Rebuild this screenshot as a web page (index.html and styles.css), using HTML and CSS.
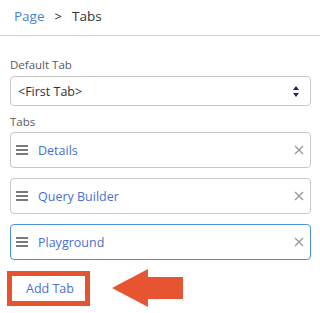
FILE: index.html
```html
<!DOCTYPE html>
<html lang="en">

<head>
    <meta charset="UTF-8">
    <meta name="viewport" content="width=device-width, initial-scale=1.0">
    <title>Tabs</title>
    <link rel="stylesheet" href="styles.css">
</head>

<body>

    <div class="crumbs">
        <a href="#">Page</a>
        <span class="sep">&gt;</span>
        <span class="current">Tabs</span>
    </div>

    <div class="panel">
        <label class="field-label">Default Tab</label>
        <div class="select">
            <span>&lt;First Tab&gt;</span>
            <svg width="6" height="11" viewBox="0 0 6 11">
                <path d="M3 0 L6 4 L0 4 Z M0 7 L6 7 L3 11 Z" fill="#1f2a4d" />
            </svg>
        </div>

        <label class="field-label tabs-label">Tabs</label>
        <div class="tab-list">
            <div class="tab-row">
                <span class="grip"><i></i><i></i><i></i></span>
                <span class="tab-name">Details</span>
                <svg class="close" width="10" height="10" viewBox="0 0 10 10">
                    <path d="M1 1 L9 9 M9 1 L1 9" stroke="#9a9a9a" stroke-width="1.4" />
                </svg>
            </div>
            <div class="tab-row">
                <span class="grip"><i></i><i></i><i></i></span>
                <span class="tab-name">Query Builder</span>
                <svg class="close" width="10" height="10" viewBox="0 0 10 10">
                    <path d="M1 1 L9 9 M9 1 L1 9" stroke="#9a9a9a" stroke-width="1.4" />
                </svg>
            </div>
            <div class="tab-row active">
                <span class="grip"><i></i><i></i><i></i></span>
                <span class="tab-name">Playground</span>
                <svg class="close" width="10" height="10" viewBox="0 0 10 10">
                    <path d="M1 1 L9 9 M9 1 L1 9" stroke="#9a9a9a" stroke-width="1.4" />
                </svg>
            </div>
        </div>

        <div class="add-row">
            <button class="add-tab">Add Tab</button>
            <svg class="arrow" width="72" height="39" viewBox="0 0 72 39">
                <path d="M0 19 L36 0 L36 8 L71 8 L71 30 L36 30 L36 38 Z" fill="#e65432" />
            </svg>
        </div>
    </div>

</body>

</html>
```

FILE: styles.css
```css
body {
    font-family: "Open Sans", "Noto Sans", sans-serif;
    background-color: #fff;
    margin: 0;
    padding: 0;
    width: 320px;
    height: 313px;
    overflow: hidden;
}

.crumbs {
    height: 36px;
    padding: 0 14px 4px;
    display: flex;
    align-items: center;
    gap: 10px;
    font-size: 13.5px;
    border-bottom: 1px solid #d0d0d0;
    box-sizing: border-box;
}

.crumbs a {
    color: #4a7fd8;
    text-decoration: none;
}

.crumbs .sep {
    color: #2b2440;
    font-size: 13px;
}

.crumbs .current {
    color: #333;
}

.panel {
    padding: 21px 9px 0 10px;
}

.field-label {
    display: block;
    font-size: 11.5px;
    color: #5a5a5a;
    line-height: 16px;
    margin-bottom: 3px;
}

.select {
    height: 30px;
    border: 1px solid #c8c8c8;
    border-radius: 4px;
    box-sizing: border-box;
    display: flex;
    align-items: center;
    justify-content: space-between;
    padding: 0 11px 0 7px;
    font-size: 12.5px;
    color: #333;
}

.tabs-label {
    margin-top: 8px;
    margin-bottom: 2px;
}

.tab-list {
    display: flex;
    flex-direction: column;
    gap: 10px;
}

.tab-row {
    height: 36px;
    border: 1px solid #c8c8c8;
    border-radius: 4px;
    box-sizing: border-box;
    display: flex;
    align-items: center;
    padding: 0 6px 0 5px;
}

.tab-row.active {
    border-color: #4a90e2;
}

.grip {
    display: flex;
    flex-direction: column;
    gap: 2px;
    width: 12px;
    margin-right: 10px;
}

.grip i {
    display: block;
    height: 2px;
    background-color: #7a7a7a;
}

.tab-name {
    flex: 1;
    font-size: 12.5px;
    color: #4a6fd8;
}

.add-row {
    display: flex;
    align-items: center;
    margin-top: 9px;
    margin-left: -3px;
}

.add-tab {
    width: 83px;
    height: 35px;
    border: 5px solid #e8532f;
    background-color: #fff;
    color: #4a6fd8;
    font-family: inherit;
    font-size: 12.5px;
    padding: 0 0 0 3px;
    cursor: pointer;
}

.arrow {
    margin-left: 22px;
}
```
